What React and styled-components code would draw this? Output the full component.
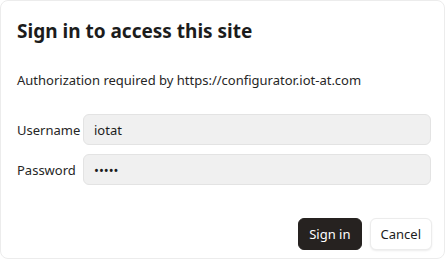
import React from "react";
import styled, { createGlobalStyle } from "styled-components";

const GlobalStyle = createGlobalStyle`
  html, body {
    margin: 0;
    padding: 0;
    background: #ffffff;
  }
  body {
    font-family: "Noto Sans", "Open Sans", sans-serif;
    color: #1f1f1f;
  }
`;

function App() {
  return (
    <>
      <GlobalStyle />
      <Dialog>
        <Title>Sign in to access this site</Title>
        <Message>Authorization required by https://configurator.iot-at.com</Message>
        <Form>
          <Label htmlFor="user">Username</Label>
          <Field id="user" defaultValue="iotat" />
          <Label htmlFor="pass">Password</Label>
          <Field id="pass" type="password" defaultValue="iotat" />
        </Form>
        <Actions>
          <Button primary>Sign in</Button>
          <Button>Cancel</Button>
        </Actions>
      </Dialog>
    </>
  );
}

const Dialog = styled.div`
  box-sizing: border-box;
  width: 445px;
  height: 259px;
  background: #ffffff;
  border: 1px solid #ececec;
  border-radius: 8px;
  padding: 16px 13px 8px 16px;
  display: flex;
  flex-direction: column;
`;

const Title = styled.h1`
  margin: 0;
  font-size: 19px;
  font-weight: 700;
  line-height: 28px;
  color: #1c1c1c;
`;

const Message = styled.p`
  margin: 25px 0 0;
  font-size: 13px;
  line-height: 20px;
  color: #262626;
`;

const Form = styled.div`
  margin-top: 24px;
  display: grid;
  grid-template-columns: 66px 1fr;
  row-gap: 9px;
  align-items: center;
`;

const Label = styled.label`
  font-size: 13px;
  color: #262626;
`;

const Field = styled.input`
  box-sizing: border-box;
  height: 31px;
  width: 100%;
  padding: 0 10px;
  background: #f0f0f0;
  border: 1px solid #e3e3e3;
  border-radius: 6px;
  font-family: inherit;
  font-size: 13px;
  color: #1c1c1c;
  outline: none;
`;

const Actions = styled.div`
  margin-top: auto;
  margin-right: -1px;
  display: flex;
  justify-content: flex-end;
  gap: 8px;
`;

const Button = styled.button`
  box-sizing: border-box;
  height: 32px;
  padding: 0 10px;
  border-radius: 6px;
  font-family: inherit;
  font-size: 13px;
  cursor: pointer;
  border: ${(p) => (p.primary ? "1px solid #262220" : "1px solid #ececec")};
  background: ${(p) => (p.primary ? "#262220" : "#ffffff")};
  color: ${(p) => (p.primary ? "#ffffff" : "#1c1c1c")};
  box-shadow: ${(p) => (p.primary ? "none" : "0 1px 2px rgba(0,0,0,0.08)")};
`;

export default App;
